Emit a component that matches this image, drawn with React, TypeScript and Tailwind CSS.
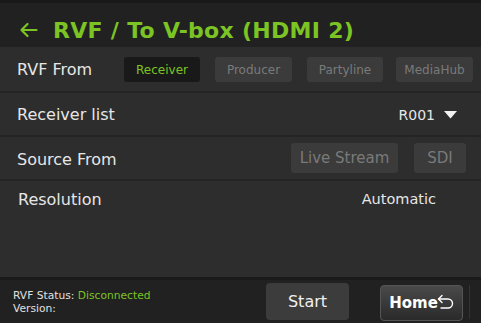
import React from 'react';

const font = { fontFamily: '"DejaVu Sans", Verdana, sans-serif' };

const Row = ({ children }: { children: React.ReactNode }) => (
  <div className="h-[44px] flex items-center justify-between pl-[17px] pt-[2px] border-b-[2px] border-[#242424]">
    {children}
  </div>
);

const App = () => {
  return (
    <div className="w-[481px] h-[323px] bg-[#2d2d2d] flex flex-col overflow-hidden" style={font}>
      {/* Header */}
      <div className="h-[47px] bg-[#212121] border-t-[3px] border-[#191919] flex items-center pl-[19px] pt-[10px]">
        <svg width="19" height="16" viewBox="0 0 19 16" fill="none" stroke="#7cc424" strokeWidth="2.2" strokeLinecap="round" strokeLinejoin="round">
          <path d="M17.5 8H2.5M8.5 2L2.5 8L8.5 14" />
        </svg>
        <h1 className="ml-[15px] text-[22px] font-bold text-[#7cc424] tracking-[0.3px]">RVF / To V-box (HDMI 2)</h1>
      </div>

      {/* RVF From */}
      <div className="h-[46px] flex items-center pl-[17px] pt-[1px] border-b-[2px] border-[#242424]">
        <span className="text-[16px] text-[#e6e6e6] w-[107px] pt-[1px]">RVF From</span>
        <div className="flex gap-[15px]">
          <button className="w-[76px] h-[25px] rounded-[3px] bg-[#191919] text-[12px] text-[#7cc424]">Receiver</button>
          <button className="w-[77px] h-[25px] rounded-[3px] bg-[#3b3b3b] text-[12px] text-[#7a7a7a]">Producer</button>
          <button className="w-[76px] h-[25px] rounded-[3px] bg-[#3b3b3b] text-[12px] text-[#7a7a7a]">Partyline</button>
          <button className="w-[77px] h-[25px] rounded-[3px] bg-[#3b3b3b] text-[12px] text-[#7a7a7a] -ml-[2px]">MediaHub</button>
        </div>
      </div>

      <Row>
        <span className="text-[16px] text-[#e6e6e6]">Receiver list</span>
        <div className="flex items-center gap-[9px] pr-[24px]">
          <span className="text-[14px] text-[#e6e6e6]">R001</span>
          <svg width="13" height="8" viewBox="0 0 13 8">
            <path d="M0 0H13L6.5 7.5Z" fill="#f2f2f2" />
          </svg>
        </div>
      </Row>

      <Row>
        <span className="text-[16px] text-[#e6e6e6] pt-[1px]">Source From</span>
        <div className="flex gap-[16px] pr-[15px] -mt-[2px]">
          <button className="w-[107px] h-[30px] rounded-[3px] bg-[#3b3b3b] text-[15px] text-[#7a7a7a]">Live Stream</button>
          <button className="w-[52px] h-[30px] rounded-[3px] bg-[#3b3b3b] text-[15px] text-[#7a7a7a]">SDI</button>
        </div>
      </Row>

      <div className="h-[36px] flex items-center justify-between pl-[18px] pt-[2px]">
        <span className="text-[16px] text-[#e6e6e6]">Resolution</span>
        <span className="text-[14.5px] text-[#e6e6e6] pr-[45px]">Automatic</span>
      </div>

      <div className="flex-1" />

      {/* Footer */}
      <div className="h-[46px] bg-[#212121] border-t-[3px] border-[#1a1a1a] flex items-center pl-[13px]">
        <div className="text-[10.7px] leading-[13px] text-[#e0e0e0] w-[253px] pt-[1px]">
          <div>
            RVF Status: <span className="text-[#7cc424]">Disconnected</span>
          </div>
          <div>Version:</div>
        </div>
        <button className="w-[83px] h-[37px] rounded-[4px] bg-[#3c3c3c] text-[16px] text-[#f0f0f0]">Start</button>
        <button className="ml-[31px] w-[83px] h-[36px] mt-[3px] rounded-[4px] bg-gradient-to-b from-[#4a4a4a] to-[#2a2a2a] border border-[#555] flex items-center justify-center text-[15px] font-bold text-white">
          Home
          <svg width="17" height="16" viewBox="0 0 17 16" fill="none" stroke="#fff" strokeWidth="1.4" strokeLinecap="round" strokeLinejoin="round" className="-ml-[1px] -mt-[2px]">
            <path d="M5 1.5L1.5 5L5 8.5" />
            <path d="M1.5 5H11a4.5 4.5 0 0 1 0 9H4" />
          </svg>
        </button>
        <div className="ml-[6px] w-px h-[34px] bg-[#333]" />
      </div>
    </div>
  );
};

export default App;
